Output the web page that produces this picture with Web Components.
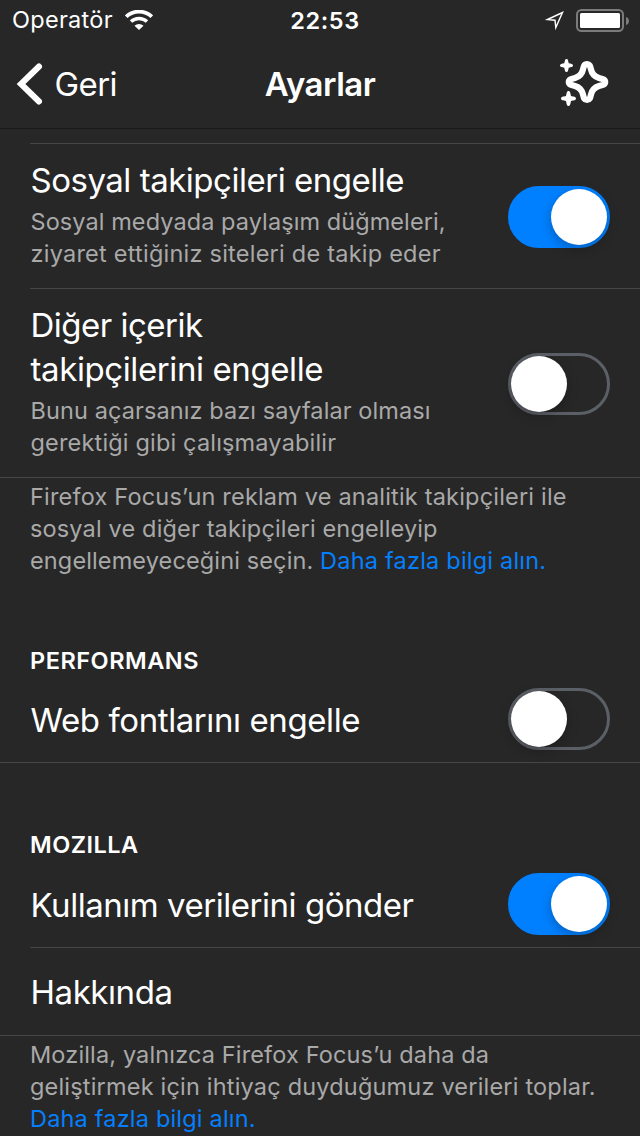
<!DOCTYPE html>
<html lang="tr">
<head>
<meta charset="utf-8">
<title>Ayarlar</title>
<style>
html,body{margin:0;background:#272727}
body{width:640px;height:1136px;overflow:hidden;font-family:Inter,"Liberation Sans",sans-serif;color:#fff}
</style>
</head>
<body>
<settings-app></settings-app>
<script>
const define=(name,html,init)=>customElements.define(name,class extends HTMLElement{
  connectedCallback(){
    if(this.shadowRoot)return;
    const t=document.createElement('template');t.innerHTML=html;
    this.attachShadow({mode:'open'}).append(t.content.cloneNode(true));
    if(init)init(this,this.shadowRoot);
  }
});

// One line of text, tracked so that its advance equals the "fit" attribute.
define('text-line',`<style>:host{display:block;white-space:pre;width:max-content}</style><slot></slot>`,(el)=>{
  const fit=parseFloat(el.getAttribute('fit'));
  const n=[...el.textContent].length;
  const natural=el.getBoundingClientRect().width;
  if(fit&&n>1)el.style.letterSpacing=((fit-natural)/(n-1)).toFixed(3)+'px';
});

define('toggle-switch',`<style>
:host{display:block;flex:none;box-sizing:border-box;width:102px;height:62px;border-radius:31px;border:3px solid #5b5f66;background:#272727}
i{display:block;width:56px;height:56px;border-radius:50%;background:#fff;box-shadow:0 4px 12px rgba(0,0,0,.25)}
:host([on]){background:#0080ff;border-color:#0080ff}
:host([on]) i{margin-left:40px}
</style><i></i>`);

define('status-bar',`<style>
:host{display:grid;grid-template-columns:1fr auto 1fr;height:40px;padding:0 10px 0 12px;font-size:23.5px;line-height:42px}
div{display:flex;align-items:center;height:40px}
.l{gap:12px}.r{justify-content:flex-end}
.time{font-weight:600;margin-left:8px}
svg{display:block}
</style>
<div class="l"><text-line fit="100.500">Operatör</text-line>
<svg width="28" height="20" viewBox="0 0 28 20" fill="none" stroke="#fff"><path d="M1.200 6.700a18.600 18.600 0 0 1 25.600 0" stroke-width="3.800"/><path d="M6 11.600a11.700 11.700 0 0 1 16 0" stroke-width="3.400"/><path d="M9.500 15.700a6.600 6.600 0 0 1 9 0L14 20Z" fill="#fff" stroke="none"/></svg></div>
<text-line class="time" fit="69">22:53</text-line>
<div class="r"><svg width="88" height="40" viewBox="542 0 88 40"><path d="M547.500 19.500 562.500 12.500 555.800 27.500 555 20.200Z" fill="none" stroke="#fff" stroke-width="1.400"/><rect x="577" y="10" width="46" height="21" rx="4.500" fill="none" stroke="#7b7b7b" stroke-width="2"/><rect x="580" y="13" width="40" height="15" rx="1.500" fill="#fff"/><path d="M626 17c4 1 4 7 0 8Z" fill="#7b7b7b"/></svg></div>`);

define('nav-bar',`<style>
:host{display:grid;grid-template-columns:1fr auto 1fr;align-items:center;height:89px;box-sizing:border-box;border-bottom:1px solid #191919;font-size:33px;line-height:88px}
.b{display:flex;align-items:center}
.b text-line{margin-left:10.500px}
.t{font-weight:600}
svg{display:block}
.s{justify-self:end}
</style>
<div class="b"><svg width="44" height="88" viewBox="0 40 44 88"><path d="M39 66.500 21 84l18 17.500" fill="none" stroke="#fff" stroke-width="6" stroke-linecap="round"/></svg><text-line fit="63">Geri</text-line></div>
<text-line class="t" fit="111">Ayarlar</text-line>
<svg class="s" width="90" height="88" viewBox="550 40 90 88" fill="#fff"><path d="M587 64c2.800 0 3.200 2.200 4 5.500q1.500 6.500 8 8.500c4.300 1.100 6.200 1.600 6.200 4s-1.900 2.900-6.200 4q-6.500 2-8 8.500c-.8 3.300-1.200 5.500-4 5.500s-3.200-2.200-4-5.500q-1.500-6.500-8-8.500c-4.300-1.100-6.200-1.600-6.200-4s1.900-2.900 6.200-4q6.500-2 8-8.500c.8-3.300 1.200-5.500 4-5.500Z" fill="none" stroke="#fff" stroke-width="6.200" stroke-linejoin="round"/><path d="M566.500 59c1.700 0 1.600 2 2.200 4.300 2.300.6 4.300.5 4.300 2.200s-2 1.600-4.300 2.200c-.6 2.300-.5 4.300-2.200 4.300s-1.600-2-2.200-4.300c-2.300-.6-4.300-.5-4.300-2.200s2-1.600 4.300-2.200c.6-2.300.5-4.300 2.200-4.300Z"/><path d="M568.500 91c1.900 0 1.800 2.400 2.500 5 2.600.7 5 .6 5 2.500s-2.400 1.800-5 2.500c-.7 2.600-.6 5-2.500 5s-1.800-2.400-2.500-5c-2.600-.7-5-.6-5-2.500s2.400-1.800 5-2.500c.7-2.600.6-5 2.500-5Z"/></svg>`);

define('settings-row',`<style>
:host{display:flex;justify-content:space-between;align-items:center;box-sizing:border-box;margin-left:30px;padding-right:30px;border-top:1px solid #464646}
:host([first]){border-top:0}
div{padding-left:.5px}
</style><div><slot></slot></div><slot name="control"></slot>`);

define('row-title',`<style>:host{display:block;font-size:33px;line-height:44px}</style><slot></slot>`);
define('row-note',`<style>:host{display:block;font-size:23.5px;line-height:32px;color:#a9a9a9;padding:4px 0}</style><slot></slot>`);
define('section-head',`<style>:host{display:block;font-size:23.5px;line-height:32px;font-weight:600;padding-left:30px}</style><slot></slot>`);
define('section-foot',`<style>:host{display:block;font-size:23.5px;line-height:32px;color:#a9a9a9;border-top:1px solid #464646;padding:3px 30px 0}</style><slot></slot>`);

define('settings-app',`<style>
:host{display:flex;flex-direction:column;width:640px;height:1136px;overflow:hidden;background:#272727}
nav-bar{margin-bottom:14px}
settings-row,section-foot,section-head,status-bar,nav-bar{flex:none}
.r1{height:145px}.r2{height:189px}.r3{height:85px;padding-bottom:1px}.r4{height:86px}.r5{height:88px}
.r1 toggle-switch,.r2 toggle-switch{margin-top:2px}
.r3 row-title,.r4 row-title{padding-top:2px}
.line{display:flex}
.link{color:#0480ff}
section-head{margin-top:66px}
.h1{margin-top:69px}
.f1{height:95px}
.end{border-bottom:1px solid #464646}
</style>
<status-bar></status-bar>
<nav-bar></nav-bar>
<settings-row class="r1"><row-title><text-line fit="374">Sosyal takipçileri engelle</text-line></row-title><row-note><text-line fit="415">Sosyal medyada paylaşım düğmeleri,</text-line><text-line fit="410">ziyaret ettiğiniz siteleri de takip eder</text-line></row-note><toggle-switch on slot="control"></toggle-switch></settings-row>
<settings-row class="r2"><row-title><text-line fit="172.5">Diğer içerik</text-line><text-line fit="293">takipçilerini engelle</text-line></row-title><row-note><text-line fit="400">Bunu açarsanız bazı sayfalar olması</text-line><text-line fit="305.5">gerektiği gibi çalışmayabilir</text-line></row-note><toggle-switch slot="control"></toggle-switch></settings-row>
<section-foot class="f1"><text-line fit="536.5">Firefox Focus’un reklam ve analitik takipçileri ile</text-line><text-line fit="407.5">sosyal ve diğer takipçileri engelleyip</text-line><div class="line"><text-line fit="290">engellemeyeceğini seçin. </text-line><text-line class="link" fit="226">Daha fazla bilgi alın.</text-line></div></section-foot>
<section-head class="h1"><text-line fit="168.5">PERFORMANS</text-line></section-head>
<settings-row first class="r3"><row-title><text-line fit="330">Web fontlarını engelle</text-line></row-title><toggle-switch slot="control"></toggle-switch></settings-row>
<div class="end"></div>
<section-head><text-line fit="108">MOZILLA</text-line></section-head>
<settings-row first class="r4"><row-title><text-line fit="383.5">Kullanım verilerini gönder</text-line></row-title><toggle-switch on slot="control"></toggle-switch></settings-row>
<settings-row class="r5"><row-title><text-line fit="142.5">Hakkında</text-line></row-title></settings-row>
<section-foot><text-line fit="459">Mozilla, yalnızca Firefox Focus’u daha da</text-line><text-line fit="565.5">geliştirmek için ihtiyaç duyduğumuz verileri toplar.</text-line><text-line class="link" fit="225.5">Daha fazla bilgi alın.</text-line></section-foot>`);
</script>
</body>
</html>
